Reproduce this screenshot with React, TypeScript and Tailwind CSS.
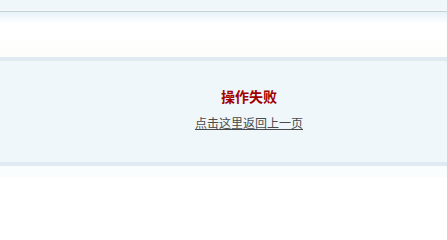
export default function App() {
  return (
    <div className="w-[447px] h-[209px] bg-white overflow-hidden" style={{ fontFamily: '"Noto Sans CJK SC", "Noto Sans", sans-serif' }}>
      <div className="h-[10px] bg-[#eff7fa]" />
      <div className="h-[1px] bg-[#f6fafb]" />
      <div className="h-[1px] bg-[#c3d1d0]" />
      <div className="h-[12px] bg-gradient-to-b from-[#e7f2fa] to-white" />
      <div className="h-[33px] bg-gradient-to-b from-white to-[#fdfefc]" />
      <div className="h-[4px] bg-[#dfeaf3]" />
      <div className="h-[101px] bg-[#f0f7fb] flex flex-col items-center pl-[51px] pt-[26px]">
        <div className="text-[14px] leading-[18px] font-bold text-[#a00000]">操作失败</div>
        <a href="#" className="mt-[10px] text-[12px] leading-[16px] text-[#4a4a4a] underline">点击这里返回上一页</a>
      </div>
      <div className="h-[4px] bg-[#dfeaf3]" />
      <div className="h-[11px] bg-[#fafdfd]" />
    </div>
  );
}
